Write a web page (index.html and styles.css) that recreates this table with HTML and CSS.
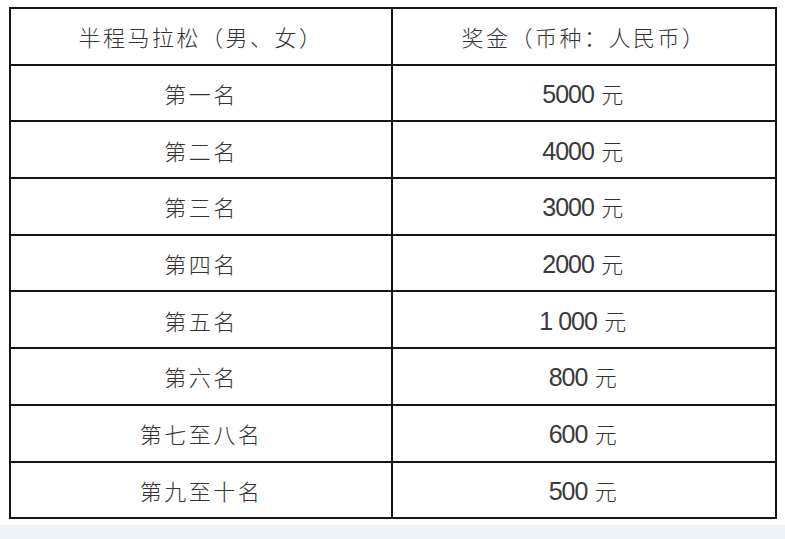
FILE: index.html
```html
<!DOCTYPE html>
<html lang="zh-CN">
<head>
<meta charset="utf-8">
<link rel="stylesheet" href="styles.css">
</head>
<body>
<div class="page">
  <table class="prize">
    <colgroup><col class="c1"><col class="c2"></colgroup>
    <tr><td>半程马拉松（男、女）</td><td>奖金（币种：人民币）</td></tr>
    <tr><td>第一名</td><td><span class="num">5000</span> 元</td></tr>
    <tr><td>第二名</td><td><span class="num">4000</span> 元</td></tr>
    <tr><td>第三名</td><td><span class="num">3000</span> 元</td></tr>
    <tr><td>第四名</td><td><span class="num">2000</span> 元</td></tr>
    <tr><td>第五名</td><td><span class="num">1 000</span> 元</td></tr>
    <tr><td>第六名</td><td><span class="num">800</span> 元</td></tr>
    <tr><td>第七至八名</td><td><span class="num">600</span> 元</td></tr>
    <tr><td>第九至十名</td><td><span class="num">500</span> 元</td></tr>
  </table>
  <div class="strip"></div>
</div>
</body>
</html>
```
FILE: styles.css
```css
html, body {
  margin: 0;
  padding: 0;
  background: #ffffff;
}
.page {
  width: 785px;
  height: 539px;
  padding: 7px 0 0 9px;
  box-sizing: border-box;
  overflow: hidden;
}
.prize {
  border-collapse: collapse;
  width: 766px;
  table-layout: fixed;
  font-family: "Noto Sans CJK SC", "Liberation Sans", sans-serif;
  color: #333333;
}
.c1 { width: 382px; }
.c2 { width: 384px; }
.prize td {
  border: 2px solid #151515;
  height: 54.7px;
  padding: 0;
  text-align: center;
  vertical-align: middle;
  font-size: 22px;
  letter-spacing: 2.5px;
  font-weight: 300;
}
.num {
  font-family: "Liberation Sans", sans-serif;
  font-size: 25px;
  letter-spacing: -1px;
  color: #3a3a3a;
}
.strip {
  margin-top: 6px;
  margin-left: -9px;
  width: 785px;
  height: 20px;
  background: #eef3f7;
}
```
